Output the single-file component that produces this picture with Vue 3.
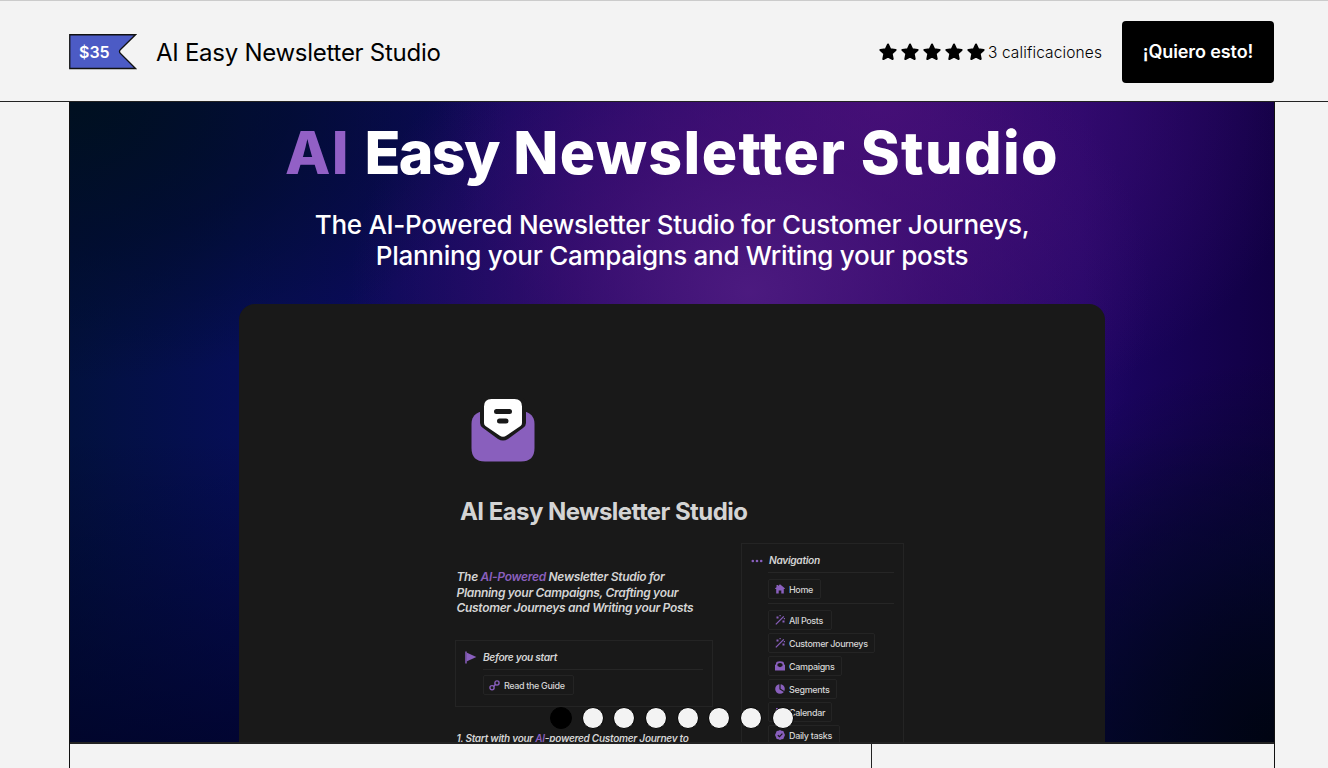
<template>
  <div class="page">
    <header class="topbar">
      <div class="price">
        <svg class="price-flag" width="68" height="36" viewBox="0 0 68 36">
          <path d="M.75 .75H66.5L51.5 15.5Q49.5 17.5 51.5 19.5L66.5 34.5H.75Z" fill="#4c5bc5" stroke="#111" stroke-width="1.3" />
        </svg>
        <span class="price-text">$35</span>
      </div>
      <h1 class="product-name">AI Easy Newsletter Studio</h1>
      <div class="rating">
        <svg v-for="n in 5" :key="n" class="star" width="18" height="18" viewBox="0 0 18 18">
          <path :d="starPath" fill="#000" stroke="#000" stroke-width="2" stroke-linejoin="round" />
        </svg>
        <span class="rating-text">3 calificaciones</span>
      </div>
      <button class="buy">¡Quiero esto!</button>
    </header>

    <main class="product">
      <section class="cover">
        <h2 class="cover-title"><span class="accent">AI</span> <span class="tight">Easy</span> Newsletter Studio</h2>
        <p class="cover-sub sub-one">The AI-Powered Newsletter Studio for Customer Journeys,</p>
        <p class="cover-sub">Planning your Campaigns and Writing your posts</p>

        <div class="mockup">
          <svg class="mail" width="64" height="64" viewBox="0 0 64 64">
            <path d="M8.5 14C3 16.500 .5 20 .5 26V50Q.5 63.500 14 63.500H50Q63.500 63.500 63.500 50V26C63.500 20 61 16.500 55.500 14Z" fill="#895fbd" />
            <path d="M20 -3H44Q55 -3 55 8V25Q55 28 52 30L37 41Q32 44 27 41L12 30Q9 28 9 25V8Q9 -3 20 -3Z" fill="#191919" />
            <path d="M20.500 1H43.500Q51 1 51 8.500V25Q51 27 49.500 28L35.500 37.500Q32 40 28.500 37.500L14.500 28Q13 27 13 25V8.500Q13 1 20.500 1Z" fill="#fff" />
            <path d="M25.500 13.500H38.500M28.500 23H35" stroke="#191919" stroke-width="5" stroke-linecap="round" />
          </svg>
          <h3 class="doc-title">AI Easy Newsletter Studio</h3>

          <div class="columns">
            <div class="intro-col">
              <div class="intro">
                <p>The <span class="accent">AI-Powered</span> Newsletter Studio for</p>
                <p>Planning your Campaigns, Crafting your</p>
                <p>Customer Journeys and Writing your Posts</p>
              </div>
              <div class="callout">
                <svg class="callout-icon" width="12" height="13" viewBox="0 0 12 13">
                  <path d="M1 .5V12.500" stroke="#895fbd" stroke-width="1.500" />
                  <path d="M1.500 1.500L11.500 6L1.500 10.500Z" fill="#895fbd" />
                </svg>
                <div class="callout-body">
                  <div class="callout-head start-head"><em>Before you start</em></div>
                  <div class="chip guide">
                    <svg width="11" height="11" viewBox="0 0 12 12" fill="none" stroke="#895fbd" stroke-width="1.500">
                      <circle cx="3.300" cy="8.500" r="2.300" />
                      <circle cx="8.700" cy="3.300" r="2.300" />
                      <path d="M5 7L7 5" />
                    </svg>
                    <span>Read the Guide</span>
                  </div>
                </div>
              </div>
              <p class="step">1. Start with your <span class="accent">AI</span>-powered Customer Journey to</p>
            </div>

            <div class="nav-box">
              <svg class="nav-dots" width="12" height="4" viewBox="0 0 12 4" fill="#895fbd">
                <circle cx="1.800" cy="2" r="1.300" />
                <circle cx="6" cy="2" r="1.300" />
                <circle cx="10.200" cy="2" r="1.300" />
              </svg>
              <div class="nav-body">
                <div class="callout-head nav-head"><em>Navigation</em></div>
                <div class="home-row">
                  <div class="chip" :style="{ width: home.width + 'px' }">
                    <svg width="10" height="10" viewBox="0 0 10 10"><path :d="home.icon" fill="#895fbd" /></svg>
                    <span>{{ home.label }}</span>
                  </div>
                </div>
                <div v-for="item in navItems" :key="item.label" class="chip" :style="{ width: item.width + 'px' }">
                  <svg width="10" height="10" viewBox="0 0 10 10">
                    <path :d="item.icon" fill="#895fbd" fill-rule="evenodd" />
                    <path v-if="item.line" :d="item.line" fill="none" :stroke="item.stroke" stroke-width="1.200" />
                  </svg>
                  <span>{{ item.label }}</span>
                </div>
              </div>
            </div>
          </div>
        </div>

        <div class="dots">
          <span v-for="n in 8" :key="n" :class="['dot', { active: n === 1 }]"></span>
        </div>
      </section>

      <section class="details">
        <div class="details-main"></div>
        <div class="details-side"></div>
      </section>
    </main>
  </div>
</template>

<script setup>
const starPath = 'M9 1.500L11.200 6.200L16.600 6.900L12.700 10.600L13.700 16L9 13.500L4.300 16L5.300 10.600L1.400 6.900L6.800 6.200Z'

const wand = 'M1.500 1.500H3.500V3.500H1.500ZM7.500 5.500H9.500V7.500H7.500ZM4.500 0H5.700V1.200H4.500ZM8.800 3H10V4.200H8.800Z'

const home = {
  label: 'Home',
  width: 53,
  icon: 'M5 .3L9.800 4.300V5H8.800V9.500H6.300V6.500H3.700V9.500H1.200V5H.2V4.300L1.500 3.200V1H3V2Z'
}

const navItems = [
  { label: 'All Posts', width: 64, icon: wand, line: 'M.8 9.300L8.800 1.300', stroke: '#895fbd' },
  { label: 'Customer Journeys', width: 107, icon: wand, line: 'M.8 9.300L8.800 1.300', stroke: '#895fbd' },
  { label: 'Campaigns', width: 74, icon: 'M0 4L1 3.200V2.500Q1 .3 5 .3T9 2.500V3.200L10 4V9.500H0ZM2.500 3V5L5 6.200L7.500 5V3Q5 1.200 2.500 3Z' },
  { label: 'Segments', width: 69, icon: 'M5 .2A4.800 4.800 0 1 0 9.800 5A4.800 4.800 0 0 0 5 .2Z', line: 'M5 0V5L9 7.500', stroke: '#191919' },
  { label: 'Calendar', width: 64, icon: 'M1 1H9V9H1Z' },
  { label: 'Daily tasks', width: 72, icon: 'M5 0L6.500 .7L8.300 1L9 2.800L10 5L9 7.200L8.300 9L6.500 9.300L5 10L3.500 9.300L1.700 9L1 7.200L0 5L1 2.800L1.700 1L3.500 .7Z', line: 'M2.800 5.200L4.500 6.700L7.400 3.600', stroke: '#191919' }
]
</script>

<style>
body {
  margin: 0;
  background: #f3f3f3;
  overflow: hidden;
}
</style>

<style scoped>
.page {
  height: 768px;
  box-sizing: border-box;
  border-top: 1px solid #cbcbcb;
  background: #f3f3f3;
  font-family: Inter, "Liberation Sans", sans-serif;
  color: #000;
  overflow: hidden;
}

h1,
h2,
h3,
p {
  margin: 0;
  white-space: nowrap;
}

.topbar {
  display: flex;
  align-items: center;
  height: 101px;
  box-sizing: border-box;
  padding: 1px 54px 0 69px;
  border-bottom: 1px solid #222;
}

.price {
  display: grid;
  width: 68px;
  height: 35px;
}

.price-flag,
.price-text {
  grid-area: 1 / 1;
}

.price-text {
  padding-left: 10px;
  font-size: 16px;
  font-weight: 600;
  line-height: 36px;
  color: #fff;
}

.product-name {
  margin-left: 19px;
  padding-top: 3px;
  font-size: 24px;
  font-weight: 400;
  line-height: 30px;
  letter-spacing: -0.27px;
}

.rating {
  display: flex;
  align-items: center;
  gap: 4px;
  margin-left: auto;
}

.rating-text {
  margin-left: -1.5px;
  padding-top: 2px;
  font-size: 15.5px;
  font-weight: 300;
  line-height: 20px;
  letter-spacing: 0.12px;
}

.buy {
  width: 152px;
  height: 62px;
  margin-left: 20px;
  padding: 1px 0 0;
  border: none;
  border-radius: 4px;
  background: #000;
  color: #fff;
  font: 600 18px/24px Inter, sans-serif;
  letter-spacing: -0.1px;
}

.product {
  width: 1206px;
  box-sizing: border-box;
  margin-left: 69px;
  border: 1px solid #111;
  border-top: none;
}

.cover {
  position: relative;
  height: 640px;
  overflow: hidden;
  background:
    radial-gradient(ellipse 400px 320px at 680px 190px, rgba(80, 28, 130, 0.9), rgba(72, 18, 120, 0.6) 45%, transparent 100%),
    radial-gradient(ellipse 440px 330px at 810px 0, rgba(72, 14, 120, 0.9), transparent 100%),
    radial-gradient(ellipse 440px 280px at 0 0, #001020, rgba(0, 12, 38, 0.65) 50%, transparent),
    radial-gradient(ellipse 360px 380px at 1204px 640px, #000412, rgba(0, 8, 34, 0.6) 50%, transparent),
    linear-gradient(0deg, rgba(0, 2, 38, 0.75), transparent 48%),
    linear-gradient(90deg, #02113e, #060e56 14%, #10065c 40%, #1c0564 84%, #110044);
}

.accent {
  color: #895fbd;
}

.cover-title {
  padding-top: 15px;
  text-align: center;
  color: #fff;
  font-size: 59px;
  font-weight: 800;
  line-height: 72px;
  letter-spacing: 1.4px;
}

.cover-title .accent {
  color: #9260c6;
}

.cover-title .tight {
  letter-spacing: -1.6px;
}

.cover-sub {
  text-align: center;
  color: #fff;
  font-size: 26px;
  font-weight: 500;
  line-height: 31px;
  letter-spacing: -0.28px;
}

.sub-one {
  margin-top: 20px;
}

.mockup {
  width: 866px;
  height: 438px;
  box-sizing: border-box;
  margin: 33px auto 0 169px;
  padding: 94px 0 0 217px;
  border-radius: 16px 16px 0 0;
  background: #191919;
  color: #d4d4d4;
  overflow: hidden;
}

.mail {
  display: block;
  margin-left: 15px;
}

.doc-title {
  margin: 34px 0 0 4px;
  font-size: 24px;
  font-weight: 700;
  line-height: 31px;
  letter-spacing: -0.56px;
}

.columns {
  display: flex;
  align-items: flex-start;
  gap: 28px;
  margin: 16px 0 0 -1px;
}

.intro-col {
  width: 258px;
}

.intro {
  padding: 26px 0 0 1.5px;
  font-size: 12px;
  font-style: italic;
  font-weight: 600;
  line-height: 15.7px;
  letter-spacing: -0.31px;
}

.callout {
  display: flex;
  height: 67px;
  box-sizing: border-box;
  margin-top: 24px;
  padding: 10px 9px 0 9px;
  border: 1px solid #242424;
}

.callout-body {
  width: 222px;
  margin-left: 6px;
}

.callout-head {
  font-size: 10.2px;
  font-weight: 600;
  line-height: 13px;
  letter-spacing: -0.32px;
  border-bottom: 1px solid #262626;
  white-space: nowrap;
}

.start-head {
  padding-bottom: 5px;
}

.chip {
  display: flex;
  align-items: center;
  gap: 4px;
  height: 20px;
  box-sizing: border-box;
  margin-bottom: 3px;
  padding-left: 6px;
  border: 1px solid #242424;
  border-radius: 2px;
  font-size: 9px;
  font-weight: 500;
  letter-spacing: -0.35px;
  white-space: nowrap;
}

.chip svg {
  flex-shrink: 0;
}

.guide {
  width: 91px;
  margin-top: 5px;
  padding-left: 5px;
}

.step {
  margin: 24px 0 0 1.5px;
  font-size: 10px;
  font-style: italic;
  font-weight: 600;
  line-height: 14px;
  letter-spacing: -0.26px;
}

.nav-box {
  display: flex;
  width: 163px;
  height: 260px;
  box-sizing: border-box;
  padding: 10px 9px 0 9px;
  border: 1px solid #242424;
}

.nav-dots {
  margin-top: 5px;
}

.nav-body {
  width: 126px;
  margin-left: 5px;
}

.nav-head {
  padding-bottom: 5px;
}

.nav-head em {
  padding-left: 1px;
}

.home-row {
  height: 31px;
  box-sizing: border-box;
  margin-bottom: 6px;
  padding-top: 6px;
  border-bottom: 1px solid #262626;
}

/* slide indicator sits over the cover image */
.dots {
  position: absolute;
  left: 480px;
  top: 605px;
  display: flex;
  gap: 9.7px;
}

.dot {
  width: 22px;
  height: 22px;
  box-sizing: border-box;
  border: 1px solid #000;
  border-radius: 50%;
  background: #f3f3f3;
}

.dot.active {
  background: #000;
}

.details {
  display: grid;
  grid-template-columns: 802px 1fr;
  height: 30px;
  border-top: 2px solid #222;
}

.details-main {
  border-right: 1px solid #222;
}
</style>
